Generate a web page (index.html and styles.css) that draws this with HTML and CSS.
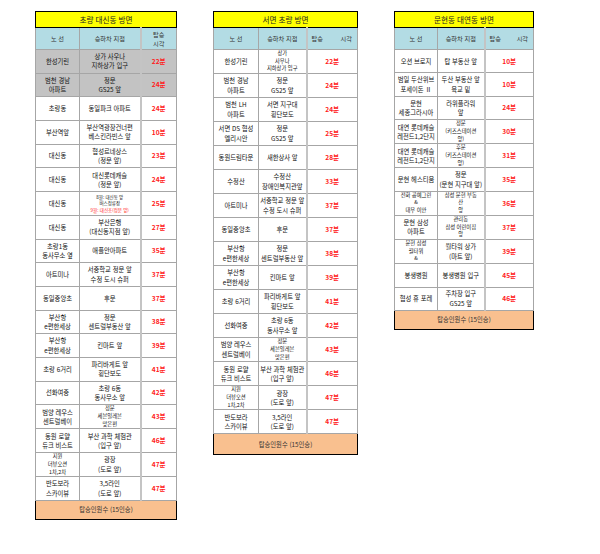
FILE: index.html
```html
<!DOCTYPE html>
<html lang="ko">
<head>
<meta charset="utf-8">
<title>노선표</title>
<link rel="stylesheet" href="styles.css">
</head>
<body>
<div class="page">
  <table class="sched t1">
    <colgroup><col class="c1"><col class="c2"><col class="c3"></colgroup>
    <thead>
      <tr class="title"><th colspan="3">초량 대신동 방면</th></tr>
      <tr class="head"><th>노 선</th><th>승하차 지점</th><th class="tm2">탑승<br>시각</th></tr>
    </thead>
    <tbody>
      <tr class="gray"><td>한성기린</td><td>상가 사우나<br>지하상가 입구</td><td class="time">22분</td></tr>
      <tr class="gray"><td>범천 경남<br>아파트</td><td>정문<br>GS25 앞</td><td class="time">24분</td></tr>
      <tr><td>초량동</td><td>동일파크 아파트</td><td class="time">24분</td></tr>
      <tr><td>부산역앞</td><td>부산역광장건너편<br>베스킨라빈스 앞</td><td class="time">10분</td></tr>
      <tr><td>대신동</td><td>협성르네상스<br>(정문 앞)</td><td class="time">23분</td></tr>
      <tr><td>대신동</td><td>대신롯데캐슬<br>(정문 앞)</td><td class="time">24분</td></tr>
      <tr><td>대신동</td><td class="tiny">8월: 대신동 앞<br>버스정류장<br><span class="red">9월: 대신초(정문 앞)</span></td><td class="time">25분</td></tr>
      <tr><td>대신동</td><td>부산은행<br>(대신동지점 앞)</td><td class="time">27분</td></tr>
      <tr><td>초량1동<br>동사무소 옆</td><td>애플안아파트</td><td class="time">35분</td></tr>
      <tr><td>아트미나</td><td>서중학교 정문 앞<br>수정 도시 슈퍼</td><td class="time">37분</td></tr>
      <tr><td>동일중앙초</td><td>후문</td><td class="time">37분</td></tr>
      <tr><td>부산항<br>e편한세상</td><td>정문<br>센트럴부동산 앞</td><td class="time">38분</td></tr>
      <tr><td>부산항<br>e편한세상</td><td>킨마트 앞</td><td class="time">39분</td></tr>
      <tr><td>초량 6거리</td><td>파리바게트 앞<br>횡단보도</td><td class="time">41분</td></tr>
      <tr><td>선화여중</td><td>초량 6동<br>동사무소 앞</td><td class="time">42분</td></tr>
      <tr><td>범양 레우스<br>센트럴베이</td><td class="l3">정문<br>세븐일레븐<br>맞은편</td><td class="time">43분</td></tr>
      <tr><td>동원 로얄<br>듀크 비스트</td><td>부산 과학 체험관<br>(입구 앞)</td><td class="time">46분</td></tr>
      <tr><td class="l3">지원<br>더뷰오션<br>1차,2차</td><td>광장<br>(도로 앞)</td><td class="time">47분</td></tr>
      <tr><td>반도보라<br>스카이뷰</td><td>3,5라인<br>(도로 앞)</td><td class="time">47분</td></tr>
    </tbody>
    <tfoot><tr class="foot"><td colspan="3">탑승인원수 (15인승)</td></tr></tfoot>
  </table>

  <table class="sched t2">
    <colgroup><col class="c1"><col class="c2"><col class="c3"></colgroup>
    <thead>
      <tr class="title"><th colspan="3">서면 초량 방면</th></tr>
      <tr class="head"><th>노 선</th><th>승하차 지점</th><th><span class="split"><span>탑승</span><span>시각</span></span></th></tr>
    </thead>
    <tbody>
      <tr><td>한성기린</td><td class="l3">상가<br>사우나<br>지하상가 입구</td><td class="time">22분</td></tr>
      <tr><td>범천 경남<br>아파트</td><td>정문<br>GS25 앞</td><td class="time">24분</td></tr>
      <tr><td>범천 LH<br>아파트</td><td>서면 지구대<br>횡단보도</td><td class="time">24분</td></tr>
      <tr><td>서면 DS 협성<br>엘리시안</td><td>정문<br>GS25 앞</td><td class="time">25분</td></tr>
      <tr><td>동원드림타운</td><td>새한상사 앞</td><td class="time">28분</td></tr>
      <tr><td>수정산</td><td>수정산<br>장애인복지관앞</td><td class="time">33분</td></tr>
      <tr><td>아트미나</td><td>서중학교 정문 앞<br>수정 도시 슈퍼</td><td class="time">37분</td></tr>
      <tr><td>동일중앙초</td><td>후문</td><td class="time">37분</td></tr>
      <tr><td>부산항<br>e편한세상</td><td>정문<br>센트럴부동산 앞</td><td class="time">38분</td></tr>
      <tr><td>부산항<br>e편한세상</td><td>킨마트 앞</td><td class="time">39분</td></tr>
      <tr><td>초량 6거리</td><td>파리바게트 앞<br>횡단보도</td><td class="time">41분</td></tr>
      <tr><td>선화여중</td><td>초량 6동<br>동사무소 앞</td><td class="time">42분</td></tr>
      <tr><td>범양 레우스<br>센트럴베이</td><td class="l3">정문<br>세븐일레븐<br>맞은편</td><td class="time">43분</td></tr>
      <tr><td>동원 로얄<br>듀크 비스트</td><td>부산 과학 체험관<br>(입구 앞)</td><td class="time">46분</td></tr>
      <tr><td class="l3">지원<br>더뷰오션<br>1차,2차</td><td>광장<br>(도로 앞)</td><td class="time">47분</td></tr>
      <tr><td>반도보라<br>스카이뷰</td><td>3,5라인<br>(도로 앞)</td><td class="time">47분</td></tr>
    </tbody>
    <tfoot><tr class="foot"><td colspan="3">탑승인원수 (15인승)</td></tr></tfoot>
  </table>

  <table class="sched t3">
    <colgroup><col class="c1"><col class="c2"><col class="c3"></colgroup>
    <thead>
      <tr class="title"><th colspan="3">문현동 대연동 방면</th></tr>
      <tr class="head"><th>노 선</th><th>승하차 지점</th><th><span class="split"><span>탑승</span><span>시각</span></span></th></tr>
    </thead>
    <tbody>
      <tr><td>오션 브로지</td><td>탑 부동산 앞</td><td class="time">10분</td></tr>
      <tr><td>범일 두산위브<br>포세이돈 Ⅱ</td><td>두산 부동산 앞<br>육교 밑</td><td class="time">10분</td></tr>
      <tr><td>문현<br>세종그라시아</td><td>라위플라워<br>앞</td><td class="time">24분</td></tr>
      <tr><td>대연 롯데캐슬<br>레전드1,2단지</td><td class="l3">정문<br>(키즈스테이션<br>앞)</td><td class="time">30분</td></tr>
      <tr><td>대연 롯데캐슬<br>레전드1,2단지</td><td class="l3">후문<br>(키즈스테이션<br>앞)</td><td class="time">31분</td></tr>
      <tr><td>문현 헤스티움</td><td>정문<br>(문현 지구대 앞)</td><td class="time">35분</td></tr>
      <tr><td class="l3">전화 공예그린<br>&amp;<br>대우 이안</td><td class="l3">삼성 문현 부동<br>산<br>앞</td><td class="time">36분</td></tr>
      <tr><td>문현 삼성<br>아파트</td><td class="l3">관리동<br>삼성 어린이집<br>앞</td><td class="time">37분</td></tr>
      <tr><td class="l3">문현 삼성<br>월타워<br>&amp;</td><td>월타워 상가<br>(마트 앞)</td><td class="time">39분</td></tr>
      <tr><td>봉생병원</td><td>봉생병원 입구</td><td class="time">45분</td></tr>
      <tr><td>협성 휴 포레</td><td>주차장 입구<br>GS25 앞</td><td class="time">46분</td></tr>
    </tbody>
    <tfoot><tr class="foot"><td colspan="3">탑승인원수 (15인승)</td></tr></tfoot>
  </table>
</div>
</body>
</html>
```

FILE: styles.css
```css
html, body {
  margin: 0;
  padding: 0;
  background: #ffffff;
}

.page {
  display: flex;
  align-items: flex-start;
  gap: 36px;
  padding: 11px 0 0 35px;
  font-family: "Noto Sans CJK KR", "Noto Sans", sans-serif;
  color: #111;
}

.sched {
  border-collapse: collapse;
  table-layout: fixed;
  border: 1px solid #000;
  font-size: 6.3px;
  line-height: 9.2px;
}

.t1 { width: 141px; }
.t1 .c1 { width: 44px; }
.t1 .c2 { width: 61px; }
.t1 .c3 { width: 36px; }

.t2 { width: 144px; }
.t2 .c1 { width: 45px; }
.t2 .c2 { width: 48px; }
.t2 .c3 { width: 51px; }

.t3 { width: 139px; }
.t3 .c1 { width: 43px; }
.t3 .c2 { width: 47px; }
.t3 .c3 { width: 49px; }

.sched th,
.sched td {
  padding: 0 1px;
  text-align: center;
  vertical-align: middle;
  white-space: nowrap;
  overflow: hidden;
  border: 1px solid #a6a6a6;
}

.sched td:nth-child(3),
.sched th:nth-child(3) {
  border-left: 2px solid #c4c4c4;
}

.title th {
  height: 15px;
  background: #ffff00;
  border: 1px solid #000;
  font-weight: normal;
  font-size: 7.6px;
  line-height: 11px;
  color: #222;
}

.head th {
  height: 21px;
  background: #b3dce4;
  font-weight: normal;
  color: #333;
  font-size: 6.2px;
  line-height: 9px;
}

.split {
  display: flex;
  justify-content: space-between;
  padding: 0 4px 0 3px;
}

.sched tbody tr {
  height: 24px;
}

.t1 tbody tr {
  height: 23.7px;
}

.t3 tbody tr {
  height: 23.4px;
}

.sched td.l3 {
  font-size: 5.3px;
  line-height: 7.7px;
}

.gray td {
  background: #c3c3c3;
}

.time {
  color: #ff1a1a;
  font-weight: bold;
  font-size: 6.6px;
}

.sched td.tiny {
  font-size: 4.5px;
  line-height: 6.6px;
}

.red {
  color: #ff1a1a;
}

.foot td {
  height: 18px;
  background: #f9c08f;
  border: 1px solid #000;
  color: #333;
  font-size: 6.3px;
}

.t2 .foot td { height: 20px; }
```
